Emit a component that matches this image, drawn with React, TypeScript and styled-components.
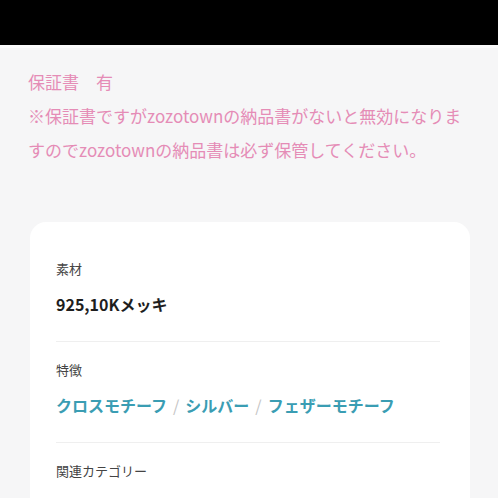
import React from 'react';
import styled, { createGlobalStyle } from 'styled-components';

const GlobalStyle = createGlobalStyle`
	html, body {
		margin: 0;
		padding: 0;
		background: #f6f6f7;
		font-family: "Noto Sans CJK JP", "Noto Sans", sans-serif;
	}
`;

const Page = styled.div`
	width: 498px;
	height: 498px;
	overflow: hidden;
	background: #f6f6f7;
	display: flex;
	flex-direction: column;
`;

const TopBar = styled.div`
	height: 45px;
	background: #000;
	border-bottom: 3px solid #fbfbfc;
	flex-shrink: 0;
`;

const Notice = styled.div`
	padding: 17px 28px 0 28px;
	color: #e58cb6;
	font-size: 17px;
	line-height: 34px;
	letter-spacing: 0;
`;

const NoticeLine = styled.p`
	margin: 0;
	width: 444px;
`;

const Card = styled.div`
	margin: 55px 28px 0 30px;
	background: #fff;
	border-radius: 16px;
	padding: 19px 30px 0 26px;
`;

const Section = styled.div<{ $last?: boolean }>`
	padding: 18px 0 25px;
	border-bottom: ${(p) => (p.$last ? 'none' : '1px solid #efefef')};
`;

const Label = styled.div`
	font-size: 13px;
	line-height: 20px;
	color: #444;
`;

const Value = styled.div`
	margin-top: 13px;
	font-size: 16px;
	line-height: 24px;
	font-weight: 700;
	color: #1e1e1e;
`;

const Tags = styled.div`
	margin-top: 13px;
	display: flex;
	align-items: center;
	font-size: 16px;
	line-height: 24px;
	font-weight: 700;
`;

const Tag = styled.span`
	color: #3a9db3;
`;

const Slash = styled.span`
	color: #c4c4c4;
	font-weight: 400;
	margin: 0 6px;
`;

const TagList = ({ items }: { items: string[] }) => (
	<Tags>
		{items.map((item, i) => (
			<React.Fragment key={item}>
				{i > 0 && <Slash>/</Slash>}
				<Tag>{item}</Tag>
			</React.Fragment>
		))}
	</Tags>
);

export default function App() {
	return (
		<Page>
			<GlobalStyle />
			<TopBar />
			<Notice>
				<NoticeLine>保証書　有</NoticeLine>
				<NoticeLine>※保証書ですがzozotownの納品書がないと無効になりますのでzozotownの納品書は必ず保管してください。</NoticeLine>
			</Notice>
			<Card>
				<Section>
					<Label>素材</Label>
					<Value>925,10Kメッキ</Value>
				</Section>
				<Section>
					<Label>特徴</Label>
					<TagList items={['クロスモチーフ', 'シルバー', 'フェザーモチーフ']} />
				</Section>
				<Section $last>
					<Label>関連カテゴリー</Label>
					<TagList items={['ネックレス・ペンダント', 'シルバー']} />
				</Section>
			</Card>
		</Page>
	);
}
